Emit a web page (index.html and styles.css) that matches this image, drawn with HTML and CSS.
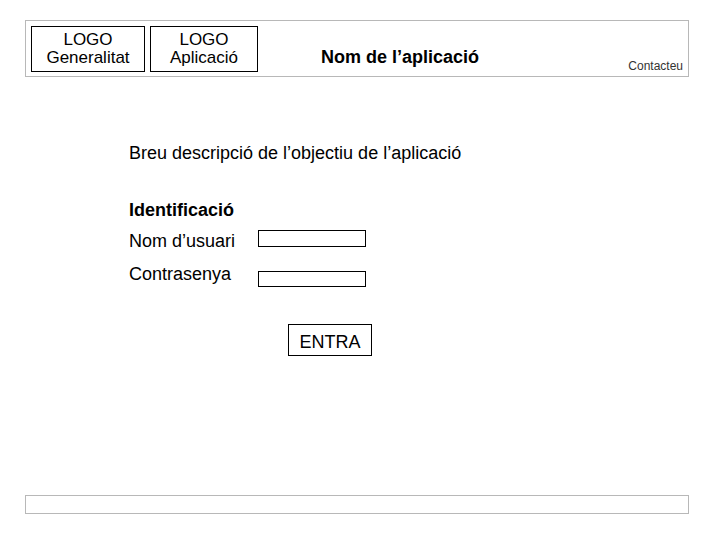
FILE: index.html
```
<!DOCTYPE html>
<html lang="ca">
<head>
<meta charset="utf-8">
<title>Nom de l’aplicació</title>
<link rel="stylesheet" href="styles.css">
</head>
<body>
<header class="header">
  <div class="logo logo-gen">LOGO<br>Generalitat</div>
  <div class="logo logo-app">LOGO<br>Aplicació</div>
  <h1 class="title">Nom de l’aplicació</h1>
  <a class="contact" href="#">Contacteu</a>
</header>
<main class="main">
  <p class="desc">Breu descripció de l’objectiu de l’aplicació</p>
  <h2 class="ident">Identificació</h2>
  <form class="form">
    <div class="row row-user">
      <label class="label" for="user">Nom d’usuari</label>
      <input class="field" id="user" type="text">
    </div>
    <div class="row row-pass">
      <label class="label" for="pass">Contrasenya</label>
      <input class="field" id="pass" type="password">
    </div>
    <div class="actions"><button class="btn" type="button">ENTRA</button></div>
  </form>
</main>
<footer class="footer"></footer>
</body>
</html>
```
FILE: styles.css
```
* { box-sizing: border-box; }
html, body { margin: 0; padding: 0; background: #fff; }
body {
  font-family: "Liberation Sans", Arial, sans-serif;
  font-size: 18px;
  color: #000;
  width: 720px;
  height: 540px;
  overflow: hidden;
}
.header {
  margin: 20px 31px 0 25px;
  height: 57px;
  border: 1px solid #b8b8b8;
  display: flex;
  align-items: flex-start;
  padding: 5px 5px 0 5px;
}
.logo {
  border: 1px solid #000;
  height: 46px;
  text-align: center;
  font-size: 17px;
  line-height: 18px;
  padding-top: 4px;
}
.logo-gen { width: 114px; }
.logo-app { width: 108px; margin-left: 5px; }
.title {
  margin: 0 0 0 63px;
  font-size: 18px;
  font-weight: bold;
  line-height: 20px;
  padding-top: 21px;
}
.contact {
  margin-left: auto;
  font-size: 12px;
  color: #333;
  text-decoration: none;
  padding-top: 33px;
  line-height: 14px;
}
.main {
  padding: 66px 0 0 129px;
  height: 418px;
}
.desc {
  margin: 0;
  line-height: 20px;
}
.ident {
  margin: 37px 0 0 0;
  font-size: 18px;
  font-weight: bold;
  line-height: 20px;
}
.form {
  margin: 10px 0 0 0;
}
.row {
  display: flex;
  align-items: flex-start;
}
.label {
  width: 129px;
  line-height: 20px;
  height: 20px;
}
.row-user .label { margin-top: 1px; }
.row-pass { margin-top: 13px; }
.field {
  width: 108px;
  height: 17px;
  border: 1px solid #000;
  margin: 0;
  padding: 0;
  outline: none;
  background: #fff;
}
#pass { margin-top: 7px; height: 16px; }
.actions {
  padding-left: 159px;
  margin-top: 37px;
}
.btn {
  display: block;
  width: 84px;
  height: 32px;
  border: 1px solid #000;
  background: #fff;
  font-family: "Liberation Sans", Arial, sans-serif;
  font-size: 18px;
  color: #000;
  padding: 4px 0 0 0;
  border-radius: 0;
}
.footer {
  margin: 0 31px 0 25px;
  height: 19px;
  border: 1px solid #b8b8b8;
}
```
